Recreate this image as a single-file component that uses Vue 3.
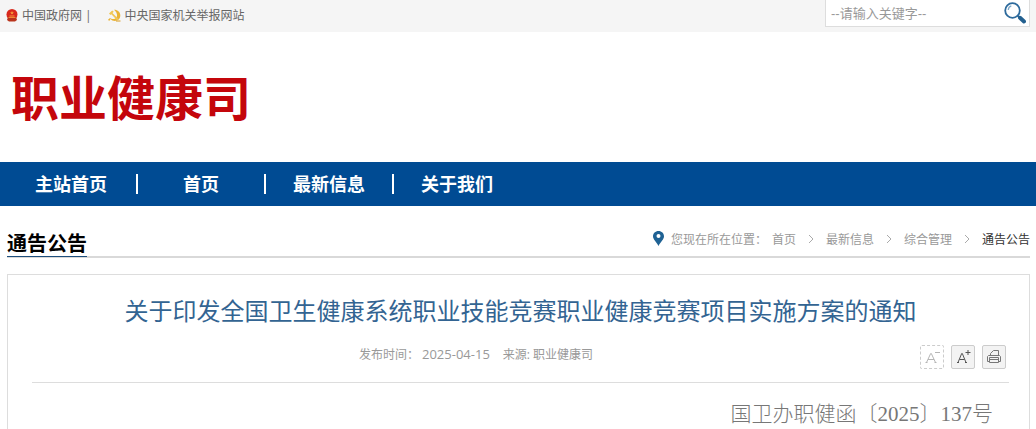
<script setup>
import { ref } from "vue";

const keyword = ref("");

// 導覽列
const navs = ["主站首页", "首页", "最新信息", "关于我们"];

// 目前位置
const crumbs = ["首页", "最新信息", "综合管理"];
</script>

<template>
  <div class="page">
    <!-- 頂部 -->
    <div class="topbar">
      <div class="sites">
        <svg width="12" height="14" viewBox="0 0 12 14">
          <circle cx="6" cy="6.500" r="5.500" fill="#d8291c" />
          <path d="M2 9h8l1 3-2 1.500H3L1 12z" fill="#b9341c" />
          <path d="M6 3l.6 1.200 1.300.1-1 .9.300 1.200L6 5.800l-1.200.6.300-1.200-1-.9 1.300-.1zM3.500 7.500h5v1h-5z" fill="#f59a3a" />
          <path d="M2.500 9.500h7" stroke="#ef8b34" />
        </svg>
        <a href="#">中国政府网</a>
        <span class="line">|</span>
        <svg class="party" width="13" height="13" viewBox="0 0 13 13">
          <path d="M6 .8c4 0 6.300 2.500 6.300 5.800 0 3.400-2.500 5.400-5.500 5.400-1.800 0-3.300-.7-4.300-1.900L1.200 12 0 10.800l2-1.700c1.500 1.300 4.800 1.500 6.300-.3C9.800 6.900 9 3.200 6 .8z" fill="#e9b335" />
          <path d="M1 4.500L4.200 1.500l1.600 1.300-1.300 1.300L10.500 10l-1.300 1.300L3.300 5.200 2.400 6z" fill="#f1c654" />
          <path d="M8 12h4.500" stroke="#d99d24" />
        </svg>
        <a href="#">中央国家机关举报网站</a>
      </div>
      <form class="search" @submit.prevent>
        <input v-model="keyword" type="text" aria-label="关键字" placeholder="--请输入关键字--">
        <button type="submit" aria-label="搜索">
          <svg width="22" height="22" viewBox="0 0 22 22" fill="none">
            <circle cx="8.500" cy="8.500" r="7.300" stroke="#2d6a9c" stroke-width="1.800" />
            <path d="M4.300 8c0-2 1.200-3.600 3-4.200" stroke="#7fa9c9" stroke-width="1.300" />
            <path d="M13.800 13.600l2 1.900" stroke="#2d6a9c" stroke-width="2" />
            <path d="M16 15.800l4 3.700" stroke="#23608f" stroke-width="4" stroke-linecap="round" />
          </svg>
        </button>
      </form>
    </div>

    <h1 class="logo">职业健康司</h1>

    <nav class="nav">
      <a v-for="item in navs" :key="item" href="#">{{ item }}</a>
    </nav>

    <div class="main">
      <!-- 欄目標題與位置 -->
      <div class="column">
        <h2>通告公告</h2>
        <div class="position">
          <svg width="11" height="15" viewBox="0 0 11 15">
            <path d="M5.500 0C2.300 0 0 2.300 0 5.300 0 8.500 3.500 11 5.500 15 7.500 11 11 8.500 11 5.300 11 2.300 8.700 0 5.500 0z" fill="#1f6294" />
            <circle cx="5.500" cy="5" r="2" fill="#fff" />
          </svg>
          <span class="label">您现在所在位置：</span>
          <template v-for="item in crumbs" :key="item">
            <a href="#">{{ item }}</a>
            <svg class="arrow" width="6" height="10" viewBox="0 0 6 10" fill="none">
              <path d="M1 1l4 4-4 4" stroke="#aaa" />
            </svg>
          </template>
          <span class="current">通告公告</span>
        </div>
      </div>

      <!-- 文章 -->
      <div class="article">
        <h3>关于印发全国卫生健康系统职业技能竞赛职业健康竞赛项目实施方案的通知</h3>
        <div class="info">
          <div class="source">
            <span>发布时间：&nbsp;<span class="date">2025-04-15</span></span>
            <span>来源: 职业健康司</span>
          </div>
          <div class="tools">
            <button class="small" type="button" aria-label="缩小字体">
              <svg width="22" height="22" viewBox="0 0 22 22" fill="none" stroke="#b5b5b5">
                <path d="M5.500 16.500L9.700 7.500h.6L14.500 16.500M4.500 16.500h2M13.500 16.500h2M7 13.500h6M14 6.500h5" />
              </svg>
            </button>
            <button type="button" aria-label="放大字体">
              <svg width="22" height="22" viewBox="0 0 22 22" fill="none" stroke="#555">
                <path d="M6 16.500L9.700 7.500h.6L14 16.500M5 16.500h2M13 16.500h2M7.500 13.500h5M13.500 6.500h5M16 4v5" />
              </svg>
            </button>
            <button type="button" aria-label="打印">
              <svg width="22" height="22" viewBox="0 0 22 22" fill="none" stroke="#777">
                <path d="M7.500 9.500v-2l3-3h5v5M6.500 15.500h-2v-5l1-1h11l1 1v5h-2M6.500 11.500h9v5h-9zM6.500 13.500h9" />
              </svg>
            </button>
          </div>
        </div>
        <p class="number">国卫办职健函〔2025〕137号</p>
      </div>
    </div>
  </div>
</template>

<style>
body {
  margin: 0;
  background: #fff;
}
</style>

<style scoped>
.page {
  font-family: "Open Sans", "Noto Sans CJK SC", sans-serif;
  font-size: 12px;
  color: #666;
}

a {
  color: inherit;
  text-decoration: none;
}

svg {
  display: block;
  flex: none;
}

/* 頂部 */
.topbar {
  display: flex;
  justify-content: space-between;
  align-items: flex-start;
  height: 32px;
  padding: 0 6px;
  background: #f5f5f5;
}

.sites {
  display: flex;
  align-items: center;
  height: 30px;
  gap: 4px;
}

.line {
  margin-left: -1px;
}

.party {
  margin-left: 12px;
}

.search {
  display: flex;
  align-items: center;
  box-sizing: border-box;
  width: 205px;
  height: 27px;
  border: 1px solid #ddd;
  border-top: 0;
  background: #fff;
}

.search input {
  flex: 1;
  min-width: 0;
  padding: 0 5px;
  border: 0;
  outline: 0;
  background: none;
  font-family: "Liberation Sans", "Noto Sans CJK SC", sans-serif;
  font-size: 13px;
}

.search input::placeholder {
  color: #999;
}

.search button {
  padding: 0 3px 0 0;
  border: 0;
  background: none;
}

.logo {
  margin: 0;
  padding: 34px 11px 32px;
  font-size: 48px;
  line-height: 64px;
  font-weight: 700;
  color: #c4060c;
}

/* 導覽列 */
.nav {
  display: flex;
  padding: 12px 6px;
  background: #004b93;
}

.nav a {
  box-sizing: border-box;
  width: 128px;
  border-left: 2px solid #fff;
  font-size: 18px;
  line-height: 20px;
  font-weight: 700;
  text-align: center;
  color: #fff;
}

.nav a:first-child {
  width: 130px;
  border-left: 0;
}

.main {
  padding: 0 6px 0 7px;
}

/* 欄目 */
.column {
  display: flex;
  justify-content: space-between;
  height: 50px;
  border-bottom: 2px solid #d9d9d9;
}

.column h2 {
  box-sizing: border-box;
  height: 51px;
  margin: 0;
  padding-top: 23px;
  border-bottom: 1px solid #1c4e7d;
  font-size: 20px;
  line-height: 30px;
  font-weight: 700;
  color: #000;
}

.position {
  display: flex;
  align-items: center;
  height: 50px;
  padding-top: 15px;
  box-sizing: border-box;
  color: #999;
}

.position .label {
  margin: 0 5px 0 7px;
}

.position .arrow {
  margin: 0 12px;
}

.current {
  color: #333;
}

/* 文章 */
.article {
  margin-top: 16px;
  padding: 16px 20px 0 24px;
  border: 1px solid #ddd;
  border-bottom: 0;
}

.article h3 {
  margin: 0;
  font-size: 24px;
  line-height: 40px;
  font-weight: 400;
  text-align: center;
  color: #336492;
}

.info {
  display: flex;
  align-items: center;
  height: 51px;
  padding-right: 3px;
  border-bottom: 1px solid #ddd;
}

.source {
  display: flex;
  flex: 1;
  justify-content: center;
  gap: 13px;
  padding-bottom: 6px;
  color: #999;
}

.date {
  font-size: 13px;
}

.tools {
  display: flex;
  gap: 7px;
}

.tools button {
  padding: 0;
  border: 1px solid #ccc;
  border-radius: 2px;
  background: #f3f3f3;
}

.tools .small {
  border-style: dashed;
  background: #fff;
}

.number {
  margin: 0;
  padding: 15px 16px 0 0;
  font-family: "Liberation Serif", "Noto Sans CJK SC", serif;
  font-size: 21px;
  line-height: 32px;
  font-weight: 300;
  text-align: right;
  color: #777;
}
</style>
